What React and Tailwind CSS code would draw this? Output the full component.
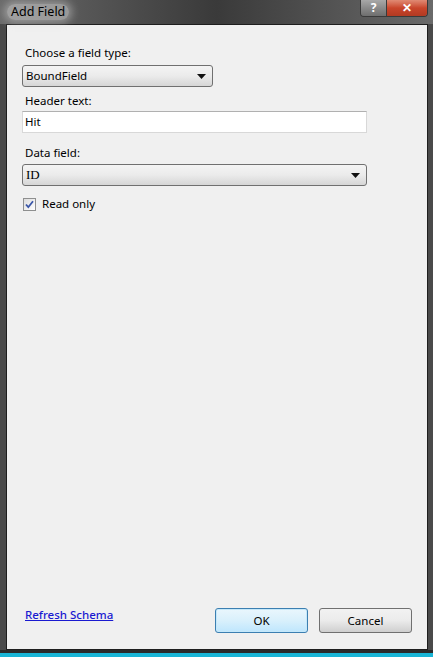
import React from 'react';

const font = { fontFamily: '"Noto Sans", "Open Sans", Arial, sans-serif' };

function Arrow() {
  return (
    <svg width="9" height="5" viewBox="0 0 9 5" className="shrink-0">
      <path d="M0 0h9L4.5 5z" fill="#111" />
    </svg>
  );
}

function Select({ value, width, serif }) {
  return (
    <div
      className={`flex h-[22px] ${width} items-center justify-between rounded-[3px] border border-[#707070] bg-gradient-to-b from-[#f4f4f4] via-[#ebebeb] to-[#d6d6d6] pl-[3px] pr-[6px]`}
    >
      <span
        className="text-[11.5px] text-black"
        style={serif ? { fontFamily: '"Liberation Serif", serif', fontSize: 13 } : undefined}
      >
        {value}
      </span>
      <Arrow />
    </div>
  );
}

export default function App() {
  return (
    <div className="flex h-[657px] w-[433px] flex-col overflow-hidden bg-[#4a4a4a]" style={font}>
      {/* title bar */}
      <div className="relative flex h-[24px] shrink-0 items-center bg-gradient-to-r from-[#6a6a6a] via-[#3a3a3a] to-[#6a6a6a] pl-[7px]">
        <span className="rounded-full bg-[#d8d8d8]/50 px-1 text-[12.5px] leading-[16px] text-black shadow-[0_0_8px_3px_rgba(220,220,220,0.45)]">
          Add Field
        </span>
        <div className="absolute right-[5px] top-0 flex h-[17px] overflow-hidden rounded-b-[4px] border border-t-0 border-[#3a3a3a]">
          <div className="flex w-[25px] items-center justify-center bg-gradient-to-b from-[#a8a8a8] to-[#6e6e6e] text-[12px] font-bold text-white">
            ?
          </div>
          <div className="flex w-[41px] items-center justify-center border-l border-[#3a3a3a] bg-gradient-to-b from-[#e08a74] via-[#c9452b] to-[#b23a22] text-[12px] font-bold text-white">
            ✕
          </div>
        </div>
      </div>

      {/* client area */}
      <div className="flex flex-1 px-[6px]">
        <div className="flex flex-1 flex-col border border-[#1e1e1e] bg-[#f0f0f0] pl-[15px] pr-[60px] pt-[20px]">
          <div className="pl-[3px] text-[11.5px] leading-[16px] text-black">Choose a field type:</div>
          <div className="mt-[4px]">
            <Select value="BoundField" width="w-[191px]" />
          </div>
          <div className="mt-[6px] pl-[3px] text-[11.5px] leading-[16px] text-black">Header text:</div>
          <div className="mt-[2px] flex h-[22px] w-[345px] items-center border border-[#d8d8d8] border-t-[#b0b0b0] bg-white pl-[2px] text-[11.5px] text-black">
            Hit
          </div>
          <div className="mt-[12px] pl-[3px] text-[11.5px] leading-[16px] text-black">Data field:</div>
          <div className="mt-[3px]">
            <Select value="ID" width="w-[345px]" serif />
          </div>
          <label className="mt-[10px] flex items-center gap-[6px] pl-[1px]">
            <span className="flex h-[13px] w-[13px] items-center justify-center border border-[#8e8f8f] bg-gradient-to-br from-[#dcdcdc] to-[#ffffff]">
              <svg width="9" height="9" viewBox="0 0 9 9">
                <path d="M1 4.5l2.3 2.7L8 1.2" fill="none" stroke="#3a56a8" strokeWidth="1.8" />
              </svg>
            </span>
            <span className="text-[11.5px] leading-[16px] text-black">Read only</span>
          </label>

          <div className="mt-auto mb-[16px] flex items-start">
            <a className="ml-[3px] text-[11.5px] font-medium leading-[14px] text-[#1a1ad0] underline">Refresh Schema</a>
            <div className="ml-auto mr-[-45px] flex gap-[11px]">
              <button className="h-[25px] w-[93px] rounded-[3px] border border-[#3c7fb1] bg-gradient-to-b from-[#eaf6fd] via-[#d9f0fc] to-[#bee6fd] text-[11.5px] text-black shadow-[inset_0_0_0_1px_#c5e8fa]">
                OK
              </button>
              <button className="h-[25px] w-[93px] rounded-[3px] border border-[#707070] bg-gradient-to-b from-[#f2f2f2] via-[#ebebeb] to-[#cfcfcf] text-[11.5px] text-black">
                Cancel
              </button>
            </div>
          </div>
        </div>
      </div>
      <div className="h-[3px] shrink-0 bg-[#2a2a2a]" />
      <div className="h-[4px] shrink-0 bg-[#19b5d6]" />
    </div>
  );
}
